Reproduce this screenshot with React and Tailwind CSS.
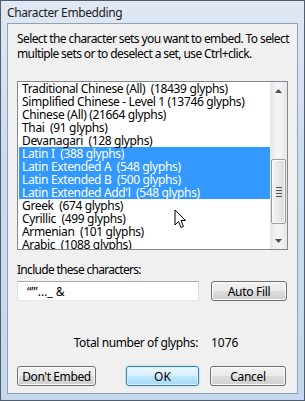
const charSets = [
  { name: "Traditional Chinese (All)  (18439 glyphs)" },
  { name: "Simplified Chinese - Level 1 (13746 glyphs)" },
  { name: "Chinese (All) (21664 glyphs)" },
  { name: "Thai  (91 glyphs)" },
  { name: "Devanagari  (128 glyphs)" },
  { name: "Latin I  (388 glyphs)", selected: true },
  { name: "Latin Extended A  (548 glyphs)", selected: true },
  { name: "Latin Extended B  (500 glyphs)", selected: true },
  { name: "Latin Extended Add'l  (548 glyphs)", selected: true },
  { name: "Greek  (674 glyphs)" },
  { name: "Cyrillic  (499 glyphs)" },
  { name: "Armenian  (101 glyphs)" },
  { name: "Arabic  (1088 glyphs)" },
]

const btn =
  "flex h-[20px] items-center justify-center rounded-[3px] border border-[#707070] bg-[linear-gradient(#f2f2f2_0%,#ebebeb_48%,#dddddd_52%,#cfcfcf_100%)] shadow-[inset_0_0_0_1px_#fbfbfb] font-normal text-black"

const App = () => {
  return (
    <div className="relative flex h-[401px] w-[305px] flex-col border border-[#4f5d6e] bg-[linear-gradient(#dfe8f3_0%,#cbdcef_40%,#c4d8ee_100%)] [font-family:'Noto_Sans',sans-serif] text-[12px] leading-[15px] text-black">
      {/* title bar */}
      <div className="flex h-[22px] items-center pl-[6px] pt-[1px] tracking-[-0.4px] text-[#1a1a1a]">Character Embedding</div>

      {/* client area */}
      <div className="mx-[6px] mb-[6px] flex flex-1 flex-col border border-[#8da2bb] bg-[#f0f0f0] px-[9px] pb-[6px] pt-[7px]">
        <p className="w-[280px] tracking-[-0.6px]">
          Select the character sets you want to embed. To select multiple sets or to deselect a set, use Ctrl+click.
        </p>

        {/* list box */}
        <div className="mt-[20px] flex h-[169px] border border-[#828790] bg-white">
          <div className="flex-1 overflow-hidden pl-[1px]">
            {charSets.map((set) => (
              <div
                key={set.name}
                className={`h-[13px] whitespace-pre pl-[3px] leading-[13px] tracking-[-0.35px] ${set.selected ? "bg-[#3399ff] text-white" : "text-black"}`}
              >
                {set.name}
              </div>
            ))}
          </div>
          {/* scrollbar */}
          <div className="flex w-[17px] flex-col bg-[linear-gradient(90deg,#e6e6e6,#f4f4f4_40%,#f4f4f4_60%,#e6e6e6)]">
            <div className="flex h-[17px] items-center justify-center">
              <svg width="7" height="4" viewBox="0 0 7 4">
                <path d="M3.5 0 L7 4 L0 4 Z" fill="#4d4d4d" />
              </svg>
            </div>
            <div className="flex-1">
              <div className="mx-[1px] mt-[60px] flex h-[65px] flex-col items-center justify-center gap-[2px] rounded-[2px] border border-[#9a9a9a] bg-[linear-gradient(90deg,#f3f3f3,#e8e8e8_50%,#d9d9d9)] shadow-[inset_0_0_0_1px_#fafafa]">
                <div className="h-[1px] w-[6px] bg-[#555]" />
                <div className="h-[1px] w-[6px] bg-[#555]" />
                <div className="h-[1px] w-[6px] bg-[#555]" />
                <div className="h-[1px] w-[6px] bg-[#555]" />
              </div>
            </div>
            <div className="flex h-[17px] items-center justify-center">
              <svg width="7" height="4" viewBox="0 0 7 4">
                <path d="M0 0 L7 0 L3.5 4 Z" fill="#4d4d4d" />
              </svg>
            </div>
          </div>
        </div>

        <div className="mt-[12px] tracking-[-0.7px]">Include these characters:</div>
        <div className="mt-[4px] flex items-center gap-[12px]">
          <div className="flex h-[20px] w-[182px] items-center border border-[#abadb3] border-b-[#e3e9ef] border-l-[#e2e3ea] border-r-[#dbdfe6] bg-white pl-[9px]">
            “”’…_ &amp;
          </div>
          <button className={`${btn} w-[76px] tracking-[-0.3px]`}>Auto Fill</button>
        </div>

        <div className="mt-[34px] flex">
          <span className="w-[181px] text-right tracking-[-0.4px]">Total number of glyphs:</span>
          <span className="ml-[13px]">1076</span>
        </div>

        <div className="mt-[16px] flex">
          <button className={`${btn} w-[79px] tracking-[-0.4px]`}>Don't Embed</button>
          <button className="ml-[30px] flex h-[20px] w-[73px] items-center justify-center rounded-[3px] border border-[#3c7fb1] bg-[linear-gradient(#eaf6fd_0%,#d9f0fc_48%,#bee6fd_52%,#a7d9f5_100%)] font-normal text-black shadow-[inset_0_0_0_1px_#d8f2fe,0_0_2px_#7fc8f2]">
            OK
          </button>
          <button className={`${btn} ml-[11px] w-[76px] tracking-[-0.3px]`}>Cancel</button>
        </div>
      </div>

      {/* mouse pointer */}
      <svg className="absolute left-[173px] top-[208px]" width="13" height="21" viewBox="0 0 13 21">
        <path d="M1 1 L1 16 L4.5 12.5 L7 18.5 L9.5 17.5 L7 11.5 L11.5 11.5 Z" fill="#ffffff" stroke="#000000" strokeWidth="1" strokeLinejoin="miter" />
      </svg>
    </div>
  )
}

export default App
